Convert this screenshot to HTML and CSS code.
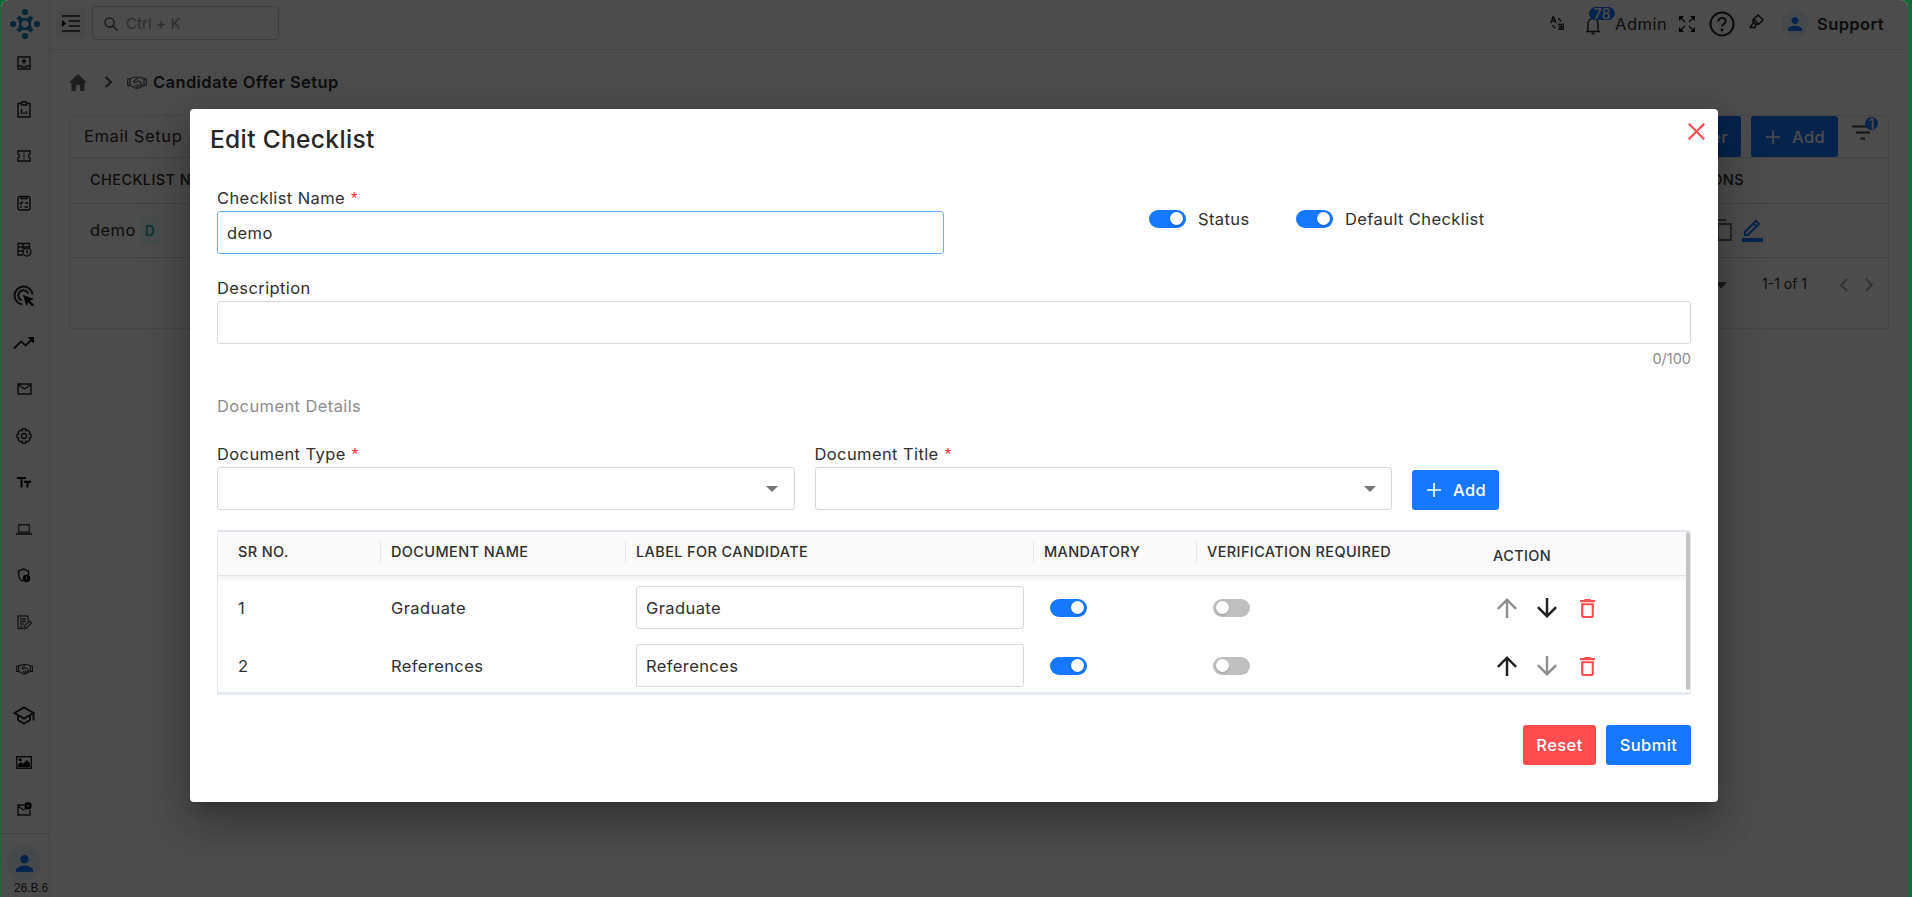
FILE: index.html
```html
<!DOCTYPE html>
<html lang="en">
<head>
<meta charset="utf-8">
<title>Candidate Offer Setup</title>
<link rel="stylesheet" href="styles.css">
</head>
<body>
<svg width="0" height="0" class="defs" aria-hidden="true">
  <symbol id="plus" viewBox="0 0 14 14"><path d="M7 0v14M0 7h14" stroke="currentColor" stroke-width="1.7" fill="none"/></symbol>
  <symbol id="up" viewBox="4 4 16 16"><path d="M4 12l1.410 1.410L11 7.830V20h2V7.830l5.580 5.590L20 12l-8-8-8 8z"/></symbol>
  <symbol id="down" viewBox="4 4 16 16"><path d="M20 12l-1.410-1.410L13 16.170V4h-2v12.170l-5.580-5.590L4 12l8 8 8-8z"/></symbol>
  <symbol id="trash" viewBox="5 3 14 18"><path d="M6 19c0 1.100.9 2 2 2h8c1.100 0 2-.9 2-2V7H6v12zM8 9h8v10H8V9zm7.500-5l-1-1h-5l-1 1H5v2h14V4z"/></symbol>
  <symbol id="person" viewBox="4 4 16 16"><path d="M12 12c2.210 0 4-1.790 4-4s-1.790-4-4-4-4 1.790-4 4 1.790 4 4 4zm0 2c-2.670 0-8 1.340-8 4v2h16v-2c0-2.660-5.330-4-8-4z"/></symbol>
  <symbol id="hands" viewBox="0 0 20 13"><g fill="none" stroke="currentColor" stroke-width="1.300" stroke-linejoin="round" stroke-linecap="round"><path d="M3 3.200C6 1 8 .8 10 1.500 12.500.7 14.500 1 17 3.200M3 9.300l5 2.500c1.500.6 3 .6 4.500-.2L17 9.300"/><path d="M10.500 2L6.800 5.200c.6 1.600 2.200 1.500 3.400.3l1.300-.8 3.300 3.300c.5 1-.6 1.700-1.400 1M8.500 9.500l1.800 1.500M10.500 8.500l2 2"/><path d="M.7 3h2.300v6.500H.7zM17 3h2.300v6.500H17z"/></g></symbol>
</svg>
<div class="app">
  <aside class="sidebar">
    <div class="logo"><svg width="32" height="32" viewBox="0 0 32 32"><g id="arm"><circle cx="16" cy="4" r="3.100"/><path d="M11 11L8 5.500C9.500 9 12.500 10 16 10s6.500-1 8-4.500L21 11l-2 2.300-3-1.100-3 1.100z"/><path d="M9 9l4.500 4.500" stroke="#1883bd" stroke-width="4"/></g><use href="#arm" transform="rotate(90 16 16)"/><use href="#arm" transform="rotate(180 16 16)"/><use href="#arm" transform="rotate(270 16 16)"/></svg></div>
    <nav class="nav">
      <span><svg width="14" height="14" viewBox="0 0 14 14"><path d="M1 1h12v12H1zM1 10h3.500l1 1.300h3l1-1.300H13M7 8.500V4M4.700 6L7 3.700 9.300 6" class="ln"/></svg></span>
      <span><svg width="14" height="17" viewBox="0 0 14 17"><path d="M4 2.500H1V16h12V2.500h-3M4.500 1h5v3h-5zM4.500 8v5M7 11v2M9.500 10v3" class="ln"/></svg></span>
      <span><svg width="14" height="12" viewBox="0 0 14 12"><path d="M1 1h12v3c-1.800.5-1.800 3.500 0 4v3H1V8c1.800-.5 1.800-3.500 0-4zM7 3v1.500M7 5.500V7M7 8v1.500" class="ln"/></svg></span>
      <span><svg width="14" height="16" viewBox="0 0 14 16"><rect x="1" y="1.500" width="12" height="13.500" rx="2" class="ln"/><path d="M4 1v2.500h6V1M3 8l1 1 2-2.500M8 8h3M3 12h2M7.500 12H11" class="ln"/></svg></span>
      <span><svg width="15" height="15" viewBox="0 0 15 15"><path d="M6 13H1V1.500h11.500V6M1 5h11.500M1 9h5M6 1.500V7" class="ln"/><circle cx="10" cy="10" r="4" class="ln"/><path d="M10 7.500V10l1.500 1.500" class="ln"/></svg></span>
      <span><svg width="22" height="22" viewBox="0 0 22 22"><path d="M9.500 19.500A9 9 0 1 1 19.500 9.500M8.500 15.300A5.200 5.200 0 1 1 15.300 8.500" class="ln b"/><path d="M10 10l11 4-4 1.700 4 4-1.800 1.600-4-4L13.500 21z"/></svg></span>
      <span><svg width="22" height="14" viewBox="0 0 22 14"><path d="M1 12.500l7-7 4.500 4L20 2.500" class="ln b"/><path d="M14.500 1H21v6.500z"/></svg></span>
      <span><svg width="15" height="12" viewBox="0 0 15 12"><path d="M1 1h13v10H1zM1 1.500L7.500 6 14 1.500" class="ln"/></svg></span>
      <span><svg width="16" height="16" viewBox="0 0 16 16"><path d="M6.500 1h3l.5 1.800 1.800-.8 2.200 2.200-.8 1.800 1.800.5v3l-1.800.5.8 1.800-2.200 2.200-1.800-.8-.5 1.800h-3L6 13.200l-1.800.8L2 11.800l.8-1.800L1 9.500v-3L2.800 6 2 4.200 4.200 2l1.800.8z" class="ln"/><circle cx="8" cy="8" r="2.500" class="ln"/></svg></span>
      <span><svg width="14" height="11" viewBox="0 0 14 11"><path d="M0 0h9v2H5.500v8.500h-2V2H0zM7 3.700h7v2h-2.500v4.800h-2V5.700H7z"/></svg></span>
      <span><svg width="16" height="11" viewBox="0 0 16 11"><path d="M2.700.7h10.600v7.500H2.700z" class="ln soft"/><path d="M0 8.800h16V11H0z" fill="#555"/></svg></span>
      <span><svg width="14" height="15" viewBox="0 0 14 15"><path d="M6 13.500C2 11.500 1.500 9 1.500 3L6.500 1l5 2v4" class="ln"/><circle cx="9.500" cy="10.500" r="3.700"/><path d="M9.500 8.500v2.500" stroke="#fff" /></svg></span>
      <span><svg width="15" height="15" viewBox="0 0 15 15"><path d="M11 5.500V1H1v12.500h5M3 4h6M3 6.500h6M3 9h4M3 11.500h2M7 13.500l.5-2.500L12.500 6l2 2-5 5z" class="ln soft"/></svg></span>
      <span><svg width="17" height="12"><use href="#hands"/></svg></span>
      <span><svg width="22" height="19" viewBox="0 0 22 19"><path d="M1.500 7L11 1.500 20.500 7 11 12.500zM5 9v5l6 3.500 6-3.500V9M20.500 7v7.500" class="ln b"/></svg></span>
      <span><svg width="16" height="13" viewBox="0 0 16 13"><path d="M.7.7h14.600v11.600H.7z" class="ln"/><circle cx="4.200" cy="3.800" r="1.500"/><path d="M2 11V8.500L5 6l2 2 4-4 3 3.500V11z"/></svg></span>
      <span><svg width="15" height="14" viewBox="0 0 15 14"><path d="M7 3H1v10h12V8M1 4l5.500 4L9 6.500" class="ln"/><circle cx="11" cy="3.700" r="3.700"/><path d="M9.500 3.700h3" stroke="#fff"/></svg></span>
    </nav>
    <div class="side-foot"><span class="avatar lg"><svg width="17" height="17"><use href="#person"/></svg></span><span class="version">26.B.6</span></div>
  </aside>
  <main class="main">
    <header class="topbar">
      <span class="menu-btn"><svg width="18" height="17" viewBox="0 0 18 17"><path d="M0 1h18M7 6h11M7 11h11M0 16h18" stroke="#222" stroke-width="1.700"/><path d="M0 5v7l4-3.500z"/></svg></span>
      <div class="search"><svg width="14" height="14" viewBox="0 0 14 14"><circle cx="5.500" cy="5.500" r="4.500" class="ln soft"/><path d="M9 9l4.500 4.500" class="ln soft"/></svg>Ctrl + K</div>
      <div class="tools">
        <svg class="t-lang" width="14" height="15" viewBox="0 0 14 15"><path d="M1 7L3 1h.6L6 7M1.800 5h3M8 8.500h3.500v4.800H8M8.500 11h3M13.300 7.500v6.500" class="ln"/><path d="M8 3h2.500v3M3 9v2.500h3" class="ln" stroke-dasharray="2 1"/></svg>
        <span class="bell"><svg width="16" height="19" viewBox="0 0 16 19"><path d="M1 15.500h14M3 15V8c0-3 2-5.500 5-5.500S13 5 13 8v7M6.500 17.500h3M8 1v1" class="ln"/></svg><b class="badge">78</b></span>
        <span class="admin">Admin</span>
        <svg class="t-full" width="16" height="16" viewBox="0 0 16 16"><path d="M1 1l5 5M15 1l-5 5M1 15l5-5M15 15l-5-5" class="ln"/><path d="M0 0h5L0 5zM16 0v5l-5-5zM0 16v-5l5 5zM16 16h-5l5-5z"/></svg>
        <svg class="t-help" width="26" height="26" viewBox="0 0 26 26"><circle cx="13" cy="13" r="11.500" class="ln b"/><path d="M9.300 10.500c0-5 7.400-4.500 7.400-.3 0 2.800-3.700 2.800-3.700 5.300" class="ln b"/><circle cx="13" cy="19" r="1.400"/></svg>
        <svg class="t-pen" width="15" height="15" viewBox="0 0 14 14"><path d="M8.500 1l4.700 4.500L9 9.500H6L3.800 7.500V5.300zM4.500 5l4.500 4.300M4 8L1 12.700h4.500L6.500 10" class="ln"/></svg>
        <span class="avatar"><svg width="14" height="14"><use href="#person"/></svg></span>
        <span class="support">Support</span>
      </div>
    </header>
    <div class="crumbs">
      <svg class="home" width="18" height="17" viewBox="0 0 18 17"><path d="M9 0l9 8.500h-2.500V17H11v-6H7v6H2.500V8.500H0z"/></svg>
      <svg class="chev" width="9" height="12" viewBox="0 0 9 12"><path d="M1.500 1L7 6l-5.500 5" class="ln b soft"/></svg>
      <svg class="hs" width="20" height="13"><use href="#hands"/></svg>
      <span>Candidate Offer Setup</span>
    </div>
    <section class="card">
      <div class="card-bar"><span class="tab">Email Setup</span>
        <div class="card-actions"><span class="btn order">Reorder</span><span class="btn add"><svg width="14" height="14"><use href="#plus"/></svg>Add</span>
        <span class="filter"><svg width="21" height="15" viewBox="0 0 21 15"><path d="M0 1.500h21M4 7.500h14M8.500 13.500h4.500" stroke="#444" stroke-width="2.200"/></svg><b class="badge one">1</b></span></div>
      </div>
      <div class="card-head"><span>CHECKLIST NAME</span><span>ACTIONS</span></div>
      <div class="card-row"><span class="nm">demo <i class="tag">D</i></span>
        <span class="ops"><svg width="19" height="22" viewBox="0 0 19 22"><path d="M1 17V1h12M5 5h13v16H5z" fill="none" stroke="#777" stroke-width="1.900"/></svg><svg width="21" height="23" viewBox="0 0 21 23"><path d="M3 16v-3L14 2l3 3L6 16zM11.500 4.500l3 3" fill="none" stroke="#1677ff" stroke-width="2"/><path d="M0 19h21v4H0z" fill="#1677ff"/></svg></span></div>
      <div class="pager"><svg width="14" height="7" viewBox="0 0 12 7"><path d="M0 0h12L6 6.500z" fill="#555"/></svg><span>1-1 of 1</span><svg width="9" height="14" viewBox="0 0 9 14"><path d="M8 1L2 7l6 6" class="dim"/></svg><svg width="9" height="14" viewBox="0 0 9 14"><path d="M1 1l6 6-6 6" class="dim"/></svg></div>
    </section>
  </main>
  <div class="overlay"></div>
</div>
<div class="modal">
  <div class="modal-head"><h2>Edit Checklist</h2><svg width="17" height="17" viewBox="0 0 17 17"><path d="M.7.7l15.600 15.600M16.300.7L.7 16.300" stroke="#ff4d4f" stroke-width="2.200"/></svg></div>
  <div class="row-name">
    <div class="field name"><label>Checklist Name <i>*</i></label><div class="input focus">demo</div></div>
    <span class="switch on"></span><span class="sw-label">Status</span>
    <span class="switch on second"></span><span class="sw-label">Default Checklist</span>
  </div>
  <div class="field desc"><label>Description</label><div class="input"></div></div>
  <div class="count">0/100</div>
  <div class="section-title">Document Details</div>
  <div class="row-doc">
    <div class="field"><label>Document Type <i>*</i></label><div class="input select"></div></div>
    <div class="field"><label>Document Title <i>*</i></label><div class="input select"></div></div>
    <span class="btn add"><svg width="14" height="14"><use href="#plus"/></svg>Add</span>
  </div>
  <div class="table">
    <div class="tr th"><span>SR NO.</span><span>DOCUMENT NAME</span><span>LABEL FOR CANDIDATE</span><span>MANDATORY</span><span>VERIFICATION REQUIRED</span><span class="act">ACTION</span></div>
    <div class="tr"><span>1</span><span>Graduate</span><span><span class="input">Graduate</span></span><span><span class="switch on"></span></span><span><span class="switch"></span></span><span class="acts"><svg class="off" width="20" height="20"><use href="#up"/></svg><svg width="20" height="20"><use href="#down"/></svg><svg class="del" width="15" height="19"><use href="#trash"/></svg></span></div>
    <div class="tr"><span>2</span><span>References</span><span><span class="input">References</span></span><span><span class="switch on"></span></span><span><span class="switch"></span></span><span class="acts"><svg width="20" height="20"><use href="#up"/></svg><svg class="off" width="20" height="20"><use href="#down"/></svg><svg class="del" width="15" height="19"><use href="#trash"/></svg></span></div>
    <div class="thumb"></div>
  </div>
  <div class="modal-foot"><span class="btn danger">Reset</span><span class="btn">Submit</span></div>
</div>
</body>
</html>
```
FILE: styles.css
```css
* { box-sizing: border-box; }
body {
  margin: 0; width: 1912px; height: 897px; overflow: hidden; position: relative;
  background: #126c36; color: #303030;
  font-family: Inter, "Liberation Sans", sans-serif; font-size: 16.5px; line-height: 20px; letter-spacing: .4px;
}
svg { display: block; flex: none; }
.defs { position: absolute; }
i { font-style: normal; }
.ln { fill: none; stroke: #222; stroke-width: 1.4; }
.ln.b { stroke-width: 2; }
.ln.soft { stroke: #555; }
.app { position: relative; width: 1907px; height: 897px; margin-left: 1px; background: #fff; border-radius: 8px 8px 0 0; display: flex; overflow: hidden; }
.sidebar { width: 49px; flex: none; border-right: 1px solid #e8e8e8; display: flex; flex-direction: column; overflow: hidden; }
.logo { padding: 8px 0 0 8px; height: 40px; fill: #1883bd; }
.nav { display: flex; flex-direction: column; height: 793px; }
.nav span { height: 46.6px; display: flex; align-items: center; justify-content: center; padding-right: 2px; }
.side-foot { border-top: 1px solid #ddd; padding: 12px 0 0 6px; }
.avatar { width: 26px; height: 26px; border-radius: 50%; background: #e6f4ff; display: flex; align-items: center; justify-content: center; fill: #1677ff; }
.avatar.lg { width: 34px; height: 34px; }
.version { display: block; padding: 0 0 0 7px; font: 12px/17px "Liberation Sans", sans-serif; letter-spacing: -.1px; white-space: nowrap; }
.main { flex: 1; }
.topbar { height: 50px; border-bottom: 1px solid #e4e4e4; display: flex; padding-left: 6px; }
.menu-btn { width: 30px; height: 30px; margin-top: 8px; background: #f4f4f4; border-radius: 4px; display: flex; align-items: center; justify-content: center; }
.search { width: 187px; height: 34px; margin: 6px 0 0 6px; border: 1px solid #d0d0d0; border-radius: 4px; display: flex; align-items: center; gap: 8px; padding: 1px 0 0 11px; color: #999; font-size: 15px; letter-spacing: .1px; }
.tools { margin-left: auto; display: flex; align-items: center; padding-right: 24px; height: 47px; }
.bell { position: relative; margin: 4px 14px 0 21px; }
.badge { position: absolute; left: 4px; top: -9px; height: 13px; width: 26px; border-radius: 7px; background: #1677ff; color: #fff; font-size: 14.5px; font-weight: 500; line-height: 13px; text-align: center; letter-spacing: 0; }
.badge.one { width: 13px; left: 13px; top: -8px; }
.admin { width: 51px; letter-spacing: .5px; }
.t-full { margin-left: 13px; }
.t-help { margin-left: 14px; }
.t-pen { margin: 0 18px 4px 14px; }
.support { margin-left: 9px; font-weight: 600; width: 67px; }
.crumbs { display: flex; align-items: center; height: 64px; padding-left: 19px; font-weight: 600; letter-spacing: .4px; }
.crumbs .home { fill: #666; }
.crumbs .chev { margin: 0 14px 0 17px; }
.crumbs .hs { margin-right: 6px; color: #666; }
.card { margin: 1px 19px 0; height: 214px; border: 1px solid #e4e4e4; border-radius: 4px; }
.card-bar { height: 42px; display: flex; align-items: center; padding-left: 14px; border-bottom: 1px solid #e0e0e0; }
.tab { letter-spacing: .6px; margin-top: -1px; }
.card-actions { margin-left: auto; display: flex; align-items: center; }
.btn { height: 40px; border-radius: 3px; background: #1677ff; color: #fff; display: inline-flex; align-items: center; justify-content: center; padding: 0 13px; font-weight: 500; }
.btn.add { width: 87px; gap: 12px; padding-left: 15px; }
.card .btn { height: 41px; }
.order { margin-right: 10px; }
.filter { position: relative; margin: -8px 15px 0 14px; }
.card-head, .card-row { display: flex; justify-content: space-between; align-items: center; padding: 0 144px 0 20px; border-bottom: 1px solid #ddd; }
.card-head { height: 46px; padding-bottom: 1px; font-size: 14.500px; font-weight: 500; }
.card-row { height: 54px; padding-right: 125px; }
.tag { display: inline-block; background: #e6fffb; color: #13a8a8; font-size: 14px; padding: 3px 5px; border-radius: 3px; margin-left: -1px; font-weight: 500; }
.ops { display: flex; gap: 10px; }
.pager { height: 54px; display: flex; align-items: center; justify-content: flex-end; padding-right: 14px; font-size: 14px; letter-spacing: 0; }
.pager span { margin: 0 32px 2px 34px; }
.pager svg:last-child { margin-left: 17px; }
.dim { fill: none; stroke: #aaa; stroke-width: 1.8; }
.overlay { position: absolute; inset: 0; background: rgba(0,0,0,.7); }
.modal { position: absolute; left: 190px; top: 109px; width: 1528px; height: 693px; background: #fff; border-radius: 4px; padding: 0 27px; box-shadow: 0 11px 15px -7px rgba(0,0,0,.2), 0 24px 38px 3px rgba(0,0,0,.14), 0 9px 46px 8px rgba(0,0,0,.12); }
.modal-head { height: 78px; margin: 0 -14px 0 -7px; display: flex; justify-content: space-between; padding-top: 14px; }
h2 { margin: 0; font-size: 24.5px; line-height: 32px; font-weight: 500; letter-spacing: .35px; color: #262626; }
.row-name { display: flex; }
.field label { display: block; height: 24px; line-height: 22px; }
.field label i { color: #ff1f1f; font-family: "Liberation Sans", sans-serif; margin-left: 1px; }
.name { width: 727px; margin-right: 205px; }
.input { display: flex; align-items: center; height: 43px; border: 1px solid #d9d9d9; border-radius: 3px; padding: 0 9px; }
.input.focus { border-color: #69b1ff; }
.switch { position: relative; display: block; flex: none; width: 37px; height: 18px; border-radius: 9px; background: #bfbfbf; }
.switch::after { content: ""; position: absolute; left: 3px; top: 2px; width: 13px; height: 13px; border-radius: 50%; background: #fff; box-shadow: 0 1px 2px rgba(0,0,0,.2); }
.switch.on { background: #1677ff; }
.switch.on::after { left: 21px; }
.row-name .switch { margin-top: 23px; }
.sw-label { padding: 22px 0 0 12px; width: 110px; white-space: nowrap; }
.desc { margin-top: 23px; }
.count { text-align: right; font-size: 14.500px; letter-spacing: 0; color: #8c8c8c; margin-top: 5px; }
.section-title { color: #8c8c8c; margin-top: 27px; height: 47px; }
.row-doc { display: flex; gap: 20px; align-items: flex-end; }
.row-doc .field { width: 577.5px; }
.select { justify-content: flex-end; padding-right: 15.5px; }
.select::after { content: ""; border: 6.500px solid transparent; border-top-color: #757575; border-bottom: 0; }
.table { position: relative; margin-top: 20px; height: 165px; border: 1px solid #e1e6ee; border-top-width: 2px; border-bottom: 3px solid #e8ecf3; border-radius: 3px; overflow: hidden; }
.tr { display: grid; grid-template-columns: 163px 245px 408px 163px 290px 1fr; align-items: center; height: 58px; }
.tr > span { padding-left: 10px; }
.tr > span:first-child { padding-left: 20px; }
.th { height: 44px; background: #fafafa; border-bottom: 1px solid #e4e4e4; font-size: 14.500px; font-weight: 500; letter-spacing: .38px; box-shadow: 0 2px 6px rgba(0,0,0,.07); margin-bottom: 3px; padding-bottom: 4px; }
.th > span:nth-child(-n+4) { border-right: 1px solid #e8e8e8; }
.th .act { padding: 8px 0 0 6px; }
.tr .input { width: 388px; margin-top: -1px; padding-top: 1px; }
.tr .switch { margin-left: 6px; }
.acts { display: flex; align-items: center; gap: 20px; fill: #222; }
.acts .off { fill: #8f8f8f; }
.acts .del { fill: #ff4d4f; margin-left: 3px; }
.thumb { position: absolute; right: 0; top: 0; width: 4px; height: 158px; border-radius: 2px; background: #c4c4c4; }
.modal-foot { display: flex; justify-content: flex-end; gap: 10px; margin-top: 30px; }
.modal-foot .btn { width: 85px; padding: 0; }
.modal-foot .danger { width: 73px; }
.danger { background: #ff4d4f; }
```
